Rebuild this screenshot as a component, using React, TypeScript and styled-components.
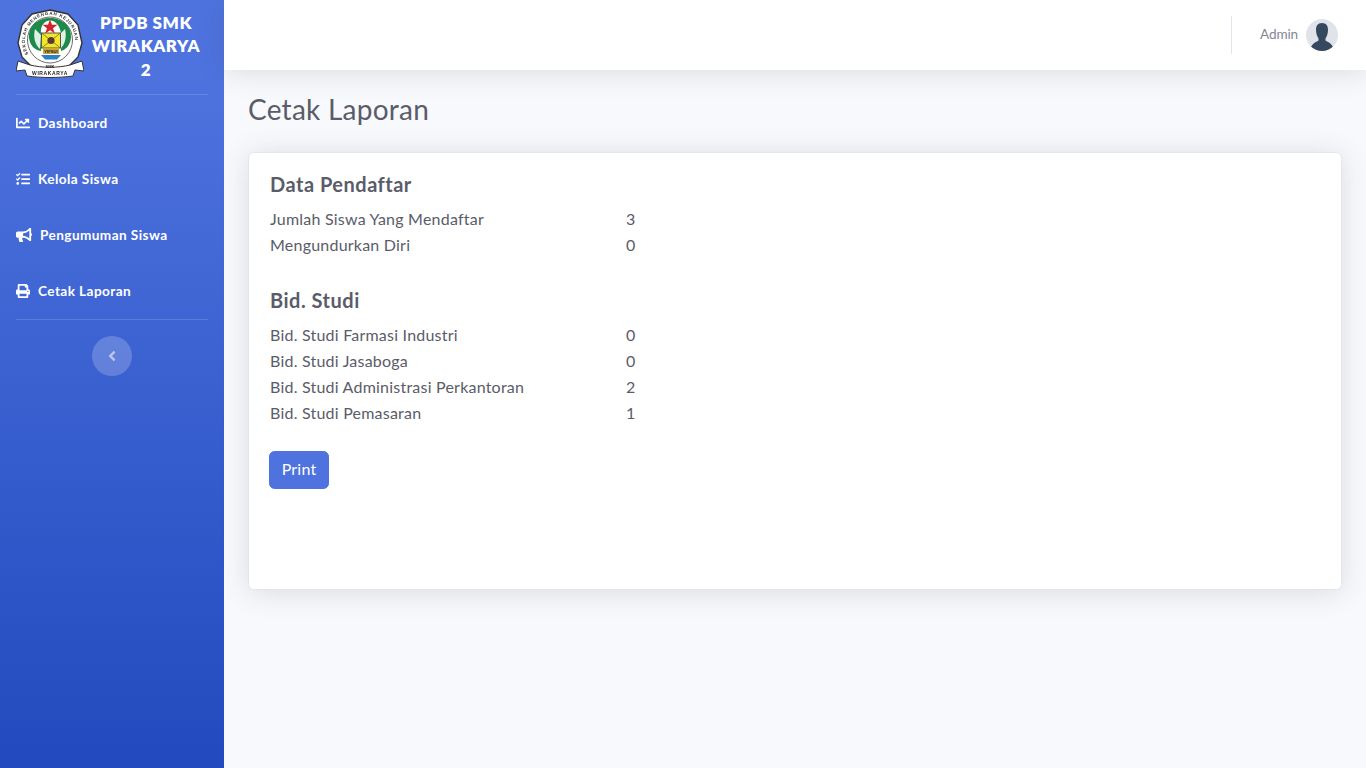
import React from "react";
import styled, { createGlobalStyle } from "styled-components";
import { FaAngleLeft, FaBullhorn, FaChartLine, FaPrint, FaTasks } from "react-icons/fa";

const FONT = `"Lato", "Open Sans", "Liberation Sans", sans-serif`;

const GlobalStyle = createGlobalStyle`
  html, body {
    margin: 0;
    padding: 0;
    background: #f8f9fc;
  }
  * {
    box-sizing: border-box;
  }
  body {
    font-family: ${FONT};
    font-size: 16px;
    color: #5a5c69;
  }
`;

const Wrapper = styled.div`
  display: flex;
  min-height: 768px;
`;

const Sidebar = styled.aside`
  width: 224px;
  flex: none;
  padding: 0 16px;
  color: #fff;
  background: linear-gradient(180deg, #4e73df 10%, #224abe 100%);
`;

const Brand = styled.div`
  display: flex;
  align-items: center;
  height: 94px;
`;

const BrandLogo = styled.svg`
  flex: none;
  width: 68px;
  height: 84px;
  filter: blur(0.35px);
`;

const BrandText = styled.div`
  flex: 1;
  padding: 0 6px 2px;
  font-size: 17px;
  line-height: 23.5px;
  font-weight: 800;
  letter-spacing: 0.55px;
  text-align: center;
`;

const Divider = styled.hr`
  margin: 0;
  border: 0;
  border-top: 1px solid rgba(255, 255, 255, 0.15);
`;

const NavItem = styled.div`
  display: flex;
  align-items: center;
  height: 56px;
  gap: 8px;
  font-size: 13.6px;
  font-weight: 700;
  letter-spacing: 0.42px;

  svg {
    width: 14px;
    height: 14px;
    flex: none;
  }
`;

const WideIcon = styled.span`
  display: flex;

  svg {
    width: 16px;
    height: 16px;
  }
`;

const ToggleRow = styled.div`
  display: flex;
  justify-content: center;
  padding-top: 16px;
`;

const Toggle = styled.button`
  display: flex;
  align-items: center;
  justify-content: center;
  width: 40px;
  height: 40px;
  padding: 0;
  border: 0;
  border-radius: 50%;
  color: rgba(255, 255, 255, 0.55);
  background: rgba(255, 255, 255, 0.2);

  svg {
    width: 16px;
    height: 16px;
  }
`;

const Main = styled.main`
  flex: 1;
  min-width: 0;
`;

const Topbar = styled.header`
  display: flex;
  align-items: center;
  justify-content: flex-end;
  height: 70px;
  padding-right: 28px;
  background: #fff;
  box-shadow: 0 2.4px 28px 0 rgba(58, 59, 69, 0.15);
`;

const TopDivider = styled.div`
  width: 1px;
  height: 38px;
  margin-right: 28px;
  background: #e3e6f0;
`;

const UserName = styled.span`
  margin-right: 8px;
  padding-bottom: 2px;
  font-size: 13.6px;
  letter-spacing: -0.15px;
  color: #858796;
`;

const Content = styled.div`
  padding: 22px 24px 0;
`;

const PageTitle = styled.h1`
  margin: 0 0 26px;
  font-size: 28px;
  line-height: 34px;
  font-weight: 400;
  letter-spacing: 0.25px;
  color: #5a5c69;
`;

const Card = styled.section`
  height: 438px;
  padding: 19px 21px;
  background: #fff;
  border: 1px solid #e3e6f0;
  border-radius: 5.6px;
  box-shadow: 0 2.4px 28px 0 rgba(58, 59, 69, 0.15);
`;

const SectionTitle = styled.h2`
  margin: 0 0 8px;
  font-size: 20px;
  line-height: 25px;
  font-weight: 700;
  letter-spacing: 0.5px;
  color: #5a5c69;
`;

const Stats = styled.dl`
  display: grid;
  grid-template-columns: 356px 1fr;
  grid-auto-rows: 26px;
  align-items: center;
  margin: 0 0 31px;
  font-size: 16px;
  letter-spacing: 0.22px;
`;

const StatLabel = styled.dt`
  font-weight: 400;
`;

const StatValue = styled.dd`
  margin: 0;
`;

const PrintButton = styled.button`
  display: block;
  width: 60px;
  height: 38px;
  margin: -5px 0 0 -1px;
  padding: 0 0 3px;
  border: 1px solid #4e73df;
  border-radius: 5.6px;
  color: #fff;
  background: #4e73df;
  font-family: ${FONT};
  font-size: 16px;
  letter-spacing: 0.2px;
`;

function Logo() {
  return (
    <BrandLogo viewBox="6 0 68 84">
      <path d="M40 5 L58 9 L68 20 L72 38 L68 52 L58 62 L40 66 L22 62 L12 52 L8 38 L12 20 L22 9 Z" fill="#fff" stroke="#333" strokeWidth="1.4" />
      <path id="logoRing" d="M19 50 A25 26 0 1 1 61 50" fill="none" />
      <text fontFamily="Liberation Sans, sans-serif" fontSize="4.5" fontWeight="700" fill="#333" letterSpacing="0.7">
        <textPath href="#logoRing" startOffset="1">SEKOLAH MENENGAH KEJURUAN</textPath>
      </text>
      <ellipse cx="40" cy="35" rx="22.5" ry="23" fill="#fff" stroke="#444" strokeWidth="0.8" />
      <path d="M40 13 C52 13 62 21 61 33 C60 41 55 45 51 46 L51 33 L31 33 L31 46 C25 45 20 41 19 33 C18 21 28 13 40 13 Z" fill="#1c8a4a" />
      <path d="M31 29 C30 20 35 15.500 40 15.500 C45 15.500 50 20 51 29 Z" fill="#fff" />
      <path d="M25 24 C23 32 25 40 30 44 L31 30 Z M55 24 C57 32 55 40 50 44 L49 30 Z" fill="#dff0e4" />
      <path d="M40 14.500 L42 19.800 L47.500 19.800 L43 23.200 L44.800 28.500 L40 25.300 L35.200 28.500 L37 23.200 L32.500 19.800 L38 19.800 Z" fill="#d5232a" />
      <rect x="31.500" y="28" width="19" height="15" fill="#f3e52c" stroke="#333" strokeWidth="0.8" />
      <path d="M31.500 28 L50.500 43 M50.500 28 L31.500 43" stroke="#66622a" strokeWidth="0.7" />
      <circle cx="41" cy="35.500" r="3.600" fill="#5b3b34" />
      <rect x="33" y="43" width="16" height="6" fill="#c9a63c" />
      <text x="41" y="47.800" textAnchor="middle" fontFamily="Liberation Sans, sans-serif" fontSize="4.200" fontWeight="700" fill="#222">YIFSUI</text>
      <path d="M31 50 H51 L47 54.500 H35 Z" fill="#2f7fc4" />
      <path d="M8 56 L20 60 C32 63 48 63 60 60 L72 56 L74 66 L65 65 L63 71 C48 73 32 73 17 71 L15 65 L6 66 Z" fill="#fff" stroke="#333" strokeWidth="1" />
      <text x="40" y="63" textAnchor="middle" fontFamily="Liberation Sans, sans-serif" fontSize="4" fontWeight="700" fill="#222">SMK</text>
      <text x="40" y="69.500" textAnchor="middle" fontFamily="Liberation Sans, sans-serif" fontSize="5" fontWeight="700" fill="#222" letterSpacing="0.6">WIRAKARYA</text>
    </BrandLogo>
  );
}

function Avatar() {
  return (
    <svg width="32" height="32" viewBox="0 0 32 32" style={{ flex: "none" }}>
      <defs>
        <clipPath id="avatarClip">
          <circle cx="16" cy="16" r="16" />
        </clipPath>
      </defs>
      <circle cx="16" cy="16" r="16" fill="#e0e4ea" />
      <g clipPath="url(#avatarClip)" fill="#34495e">
        <path d="M16 4 C20.500 4 22 7 22 11 C22 15 20.500 18 19.500 19.500 L19.500 21.500 C22 23.500 27 24 28 32 L4 32 C5 24 10 23.500 12.500 21.500 L12.500 19.500 C11.500 18 10 15 10 11 C10 7 11.500 4 16 4 Z" />
      </g>
    </svg>
  );
}

const dataPendaftar = [
  ["Jumlah Siswa Yang Mendaftar", 3],
  ["Mengundurkan Diri", 0],
];

const bidStudi = [
  ["Bid. Studi Farmasi Industri", 0],
  ["Bid. Studi Jasaboga", 0],
  ["Bid. Studi Administrasi Perkantoran", 2],
  ["Bid. Studi Pemasaran", 1],
];

function StatList({ rows }: { rows: (string | number)[][] }) {
  return (
    <Stats>
      {rows.map(([label, value]) => (
        <React.Fragment key={label}>
          <StatLabel>{label}</StatLabel>
          <StatValue>{value}</StatValue>
        </React.Fragment>
      ))}
    </Stats>
  );
}

export default function App(): JSX.Element {
  return (
    <Wrapper>
      <GlobalStyle />
      <Sidebar>
        <Brand>
          <Logo />
          <BrandText>PPDB SMK WIRAKARYA 2</BrandText>
        </Brand>
        <Divider />
        <NavItem>
          <FaChartLine />
          Dashboard
        </NavItem>
        <NavItem>
          <FaTasks />
          Kelola Siswa
        </NavItem>
        <NavItem>
          <WideIcon>
            <FaBullhorn />
          </WideIcon>
          Pengumuman Siswa
        </NavItem>
        <NavItem>
          <FaPrint />
          Cetak Laporan
        </NavItem>
        <Divider />
        <ToggleRow>
          <Toggle>
            <FaAngleLeft />
          </Toggle>
        </ToggleRow>
      </Sidebar>
      <Main>
        <Topbar>
          <TopDivider />
          <UserName>Admin</UserName>
          <Avatar />
        </Topbar>
        <Content>
          <PageTitle>Cetak Laporan</PageTitle>
          <Card>
            <SectionTitle>Data Pendaftar</SectionTitle>
            <StatList rows={dataPendaftar} />
            <SectionTitle>Bid. Studi</SectionTitle>
            <StatList rows={bidStudi} />
            <PrintButton>Print</PrintButton>
          </Card>
        </Content>
      </Main>
    </Wrapper>
  );
}
